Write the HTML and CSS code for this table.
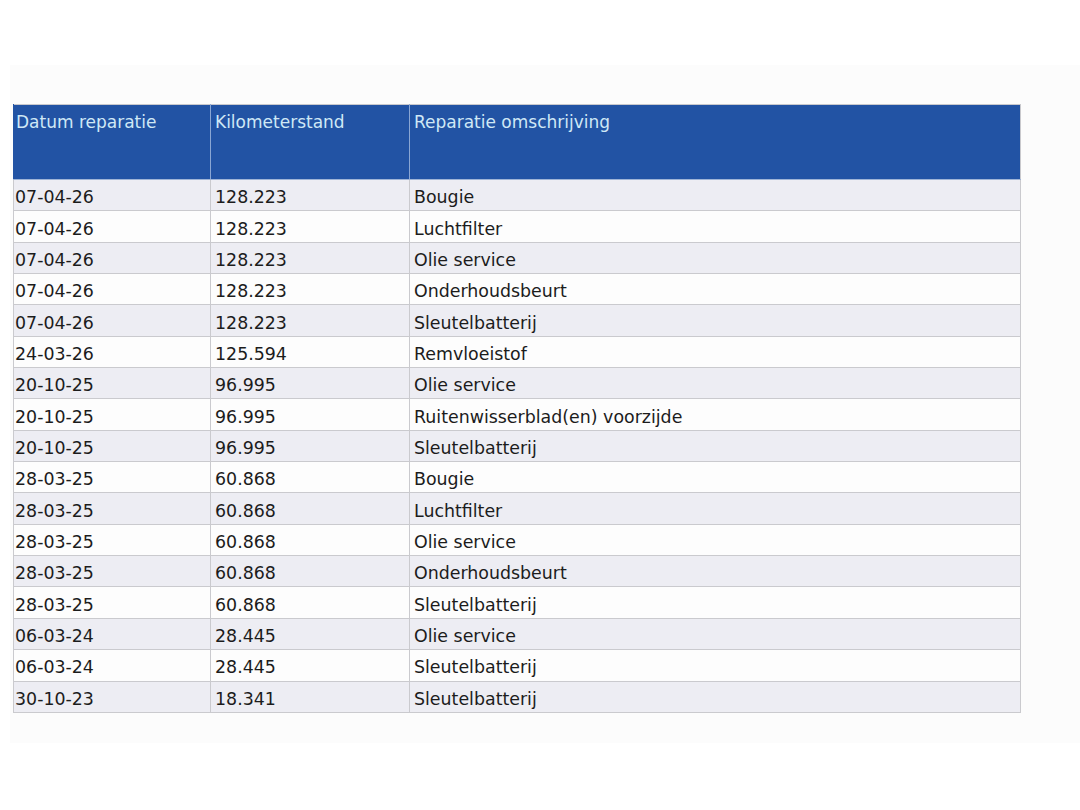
FILE: index.html
```html
<!DOCTYPE html>
<html lang="nl">
<head>
<meta charset="utf-8">
<title>Reparaties</title>
<link rel="stylesheet" href="styles.css">
</head>
<body>
<div class="panel">
  <table class="rep">
    <colgroup>
      <col class="c1"><col class="c2"><col class="c3">
    </colgroup>
    <thead>
      <tr><th>Datum reparatie</th><th>Kilometerstand</th><th>Reparatie omschrijving</th></tr>
    </thead>
    <tbody>
      <tr><td>07-04-26</td><td>128.223</td><td>Bougie</td></tr>
      <tr><td>07-04-26</td><td>128.223</td><td>Luchtfilter</td></tr>
      <tr><td>07-04-26</td><td>128.223</td><td>Olie service</td></tr>
      <tr><td>07-04-26</td><td>128.223</td><td>Onderhoudsbeurt</td></tr>
      <tr><td>07-04-26</td><td>128.223</td><td>Sleutelbatterij</td></tr>
      <tr><td>24-03-26</td><td>125.594</td><td>Remvloeistof</td></tr>
      <tr><td>20-10-25</td><td>96.995</td><td>Olie service</td></tr>
      <tr><td>20-10-25</td><td>96.995</td><td>Ruitenwisserblad(en) voorzijde</td></tr>
      <tr><td>20-10-25</td><td>96.995</td><td>Sleutelbatterij</td></tr>
      <tr><td>28-03-25</td><td>60.868</td><td>Bougie</td></tr>
      <tr><td>28-03-25</td><td>60.868</td><td>Luchtfilter</td></tr>
      <tr><td>28-03-25</td><td>60.868</td><td>Olie service</td></tr>
      <tr><td>28-03-25</td><td>60.868</td><td>Onderhoudsbeurt</td></tr>
      <tr><td>28-03-25</td><td>60.868</td><td>Sleutelbatterij</td></tr>
      <tr><td>06-03-24</td><td>28.445</td><td>Olie service</td></tr>
      <tr><td>06-03-24</td><td>28.445</td><td>Sleutelbatterij</td></tr>
      <tr><td>30-10-23</td><td>18.341</td><td>Sleutelbatterij</td></tr>
    </tbody>
  </table>
</div>
</body>
</html>
```

FILE: styles.css
```css
html, body {
  margin: 0;
  padding: 0;
  background: #ffffff;
}
body {
  font-family: "DejaVu Sans", Verdana, sans-serif;
  width: 1080px;
  height: 810px;
  overflow: hidden;
  padding-top: 65px;
  box-sizing: border-box;
}
.panel {
  margin-left: 10px;
  height: 678px;
  background: #fcfcfc;
  padding: 39px 0 0 3px;
  box-sizing: border-box;
}
.rep {
  border-collapse: collapse;
  table-layout: fixed;
  width: 1008px;
  border: 1px solid #c9c9cd;
}
.c1 { width: 197px; }
.c2 { width: 199px; }
.rep th {
  background: #2253a4;
  color: #cfe8f6;
  font-weight: normal;
  font-size: 17px;
  text-align: left;
  vertical-align: top;
  height: 75px;
  padding: 7px 4px 0 4px;
  box-sizing: border-box;
  border-left: 1px solid #8aa6d3;
  border-bottom: 1px solid #9fb4d6;
}
.rep th:first-child {
  border-left: 1px solid #2253a4;
  padding-left: 2px;
}
.rep td {
  font-size: 17.4px;
  color: #1c1c1c;
  height: 31.35px;
  padding: 4px 4px 0 4px;
  box-sizing: border-box;
  border: 1px solid #cacace;
  white-space: nowrap;
}
.rep td:first-child { padding-left: 1px; }
.rep tbody tr:nth-child(odd) td { background: #ededf3; }
.rep tbody tr:nth-child(even) td { background: #fdfdfd; }
```
